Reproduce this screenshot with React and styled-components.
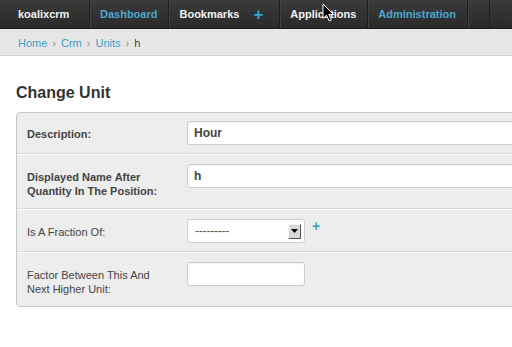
import styled, { createGlobalStyle } from "styled-components";

const GlobalStyle = createGlobalStyle`
  body {
    margin: 0;
    background: #fff;
    font-family: "Liberation Sans", Arial, sans-serif;
    overflow: hidden;
  }
`;

const navItems = [
  { label: "Dashboard", link: true },
  { label: "Bookmarks", plus: true },
  { label: "Applications" },
  { label: "Administration", link: true },
];

const rows = [
  { label: "Description:", required: true, value: "Hour", type: "text" },
  {
    label: "Displayed Name After Quantity In The Position:",
    required: true,
    value: "h",
    type: "text",
  },
  { label: "Is A Fraction Of:", type: "select" },
  { label: "Factor Between This And Next Higher Unit:", type: "short" },
];

export default function App() {
  return (
    <>
      <GlobalStyle />
      <Header>
        <Brand>koalixcrm</Brand>
        {navItems.map((item) => (
          <NavItem key={item.label} $plus={item.plus}>
            <NavLink $link={item.link}>{item.label}</NavLink>
            {item.plus && <NavPlus>+</NavPlus>}
          </NavItem>
        ))}
        <NavItem />
        <Cursor width="13" height="19" viewBox="0 0 13 19">
          <path
            d="M1 1 L1 15.5 L4.5 12.2 L7.2 18 L9.4 17 L6.8 11.4 L11.6 11.4 Z"
            fill="#000"
            stroke="#fff"
            strokeWidth="1"
            strokeLinejoin="round"
          />
        </Cursor>
      </Header>
      <Breadcrumbs>
        <Crumb href="#">Home</Crumb>
        <Sep>›</Sep>
        <Crumb href="#">Crm</Crumb>
        <Sep>›</Sep>
        <Crumb href="#">Units</Crumb>
        <Sep>›</Sep>
        <Current>h</Current>
      </Breadcrumbs>
      <Main>
        <Title>Change Unit</Title>
        <Fieldset>
          {rows.map((row, i) => (
            <Row key={row.label} $first={i === 0}>
              <Label $required={row.required}>{row.label}</Label>
              {row.type === "text" && <TextInput defaultValue={row.value} />}
              {row.type === "select" && (
                <>
                  <SelectBox>
                    <SelectValue>---------</SelectValue>
                    <SelectArrow>
                      <svg width="7" height="4" viewBox="0 0 7 4">
                        <path d="M0 0 H7 L3.5 4 Z" fill="#000" />
                      </svg>
                    </SelectArrow>
                  </SelectBox>
                  <AddLink>+</AddLink>
                </>
              )}
              {row.type === "short" && <ShortInput />}
            </Row>
          ))}
        </Fieldset>
      </Main>
    </>
  );
}

const Header = styled.div`
  position: relative;
  display: flex;
  height: 28px;
  background: linear-gradient(#3b3b3b, #2a2a2a);
  border-bottom: 1px solid #1e1e1e;
  align-items: stretch;
  width: 1000px;
`;
const Brand = styled.div`
  display: flex;
  align-items: center;
  width: 90px;
  box-sizing: border-box;
  padding-left: 18px;
  border-right: 1px solid #1f1f1f;
  color: #f0f0f0;
  font-size: 11px;
  font-weight: bold;
`;
const NavItem = styled.div`
  display: flex;
  align-items: center;
  padding: ${(p) => (p.$plus ? "0 16px 0 10px" : "0 11px 0 10px")};
  border-right: 1px solid #1f1f1f;
  box-shadow: inset 1px 0 0 #424242;
`;
const NavLink = styled.span`
  color: ${(p) => (p.$link ? "#4aa8cf" : "#f2f2f2")};
  font-size: 11px;
  font-weight: bold;
`;
const NavPlus = styled.span`
  margin-left: 14px;
  color: #2fa3cc;
  font-size: 17px;
  font-weight: bold;
  line-height: 1;
`;
const Cursor = styled.svg`
  position: absolute;
  left: 322px;
  top: 3px;
`;
const Breadcrumbs = styled.div`
  display: flex;
  align-items: center;
  height: 27px;
  padding: 0 18px;
  background: #e6e6e6;
  border-bottom: 1px solid #d2d2d2;
  font-size: 11px;
  padding-top: 1px;
  box-sizing: border-box;
`;
const Crumb = styled.a`
  color: #3a9fc6;
  text-decoration: none;
`;
const Sep = styled.span`
  margin: 0 5px;
  color: #888;
`;
const Current = styled.span`
  color: #444;
`;
const Main = styled.div`
  padding: 0 16px;
  width: 1000px;
`;
const Title = styled.h1`
  margin: 27px 0 9px;
  font-size: 16px;
  line-height: 20px;
  font-weight: bold;
  color: #333;
`;
const Fieldset = styled.div`
  border: 1px solid #c8c8c8;
  border-radius: 4px;
  background: #ededed;
  width: 900px;
`;
const Row = styled.div`
  display: flex;
  align-items: flex-start;
  padding: ${(p) => (p.$first ? "8px" : "9px")} 10px 8px;
  border-top: ${(p) => (p.$first ? "none" : "1px solid #fff")};
  border-bottom: 1px solid #d8d8d8;
  &:last-child {
    border-bottom: none;
  }
`;
const Label = styled.div`
  width: 140px;
  margin-right: 20px;
  padding: 6px 0 2px;
  font-size: 11px;
  line-height: 14px;
  color: #444;
  font-weight: ${(p) => (p.$required ? "bold" : "normal")};
`;
const TextInput = styled.input`
  width: 500px;
  height: 24px;
  box-sizing: border-box;
  border: 1px solid #ccc;
  border-radius: 3px;
  background: #fff;
  padding: 0 6px;
  font-family: "Liberation Sans", Arial, sans-serif;
  font-size: 12px;
  font-weight: bold;
  color: #444;
  box-shadow: inset 0 1px 2px rgba(0, 0, 0, 0.05);
`;
const ShortInput = styled(TextInput)`
  width: 118px;
`;
const SelectBox = styled.div`
  display: flex;
  align-items: center;
  justify-content: space-between;
  width: 118px;
  height: 24px;
  box-sizing: border-box;
  border: 1px solid #ccc;
  border-radius: 3px;
  background: #fff;
  padding: 0 3px 0 7px;
`;
const SelectValue = styled.span`
  font-size: 12px;
  color: #555;
  letter-spacing: -0.2px;
`;
const SelectArrow = styled.span`
  display: flex;
  align-items: center;
  justify-content: center;
  width: 13px;
  height: 15px;
  box-sizing: border-box;
  background: #d8d8d8;
  border-top: 1px solid #f4f4f4;
  border-left: 1px solid #f4f4f4;
  border-right: 1px solid #555;
  border-bottom: 1px solid #555;
`;
const AddLink = styled.span`
  margin: 0 0 0 7px;
  color: #3aa6cf;
  font-size: 14px;
  font-weight: bold;
  line-height: 14px;
`;
